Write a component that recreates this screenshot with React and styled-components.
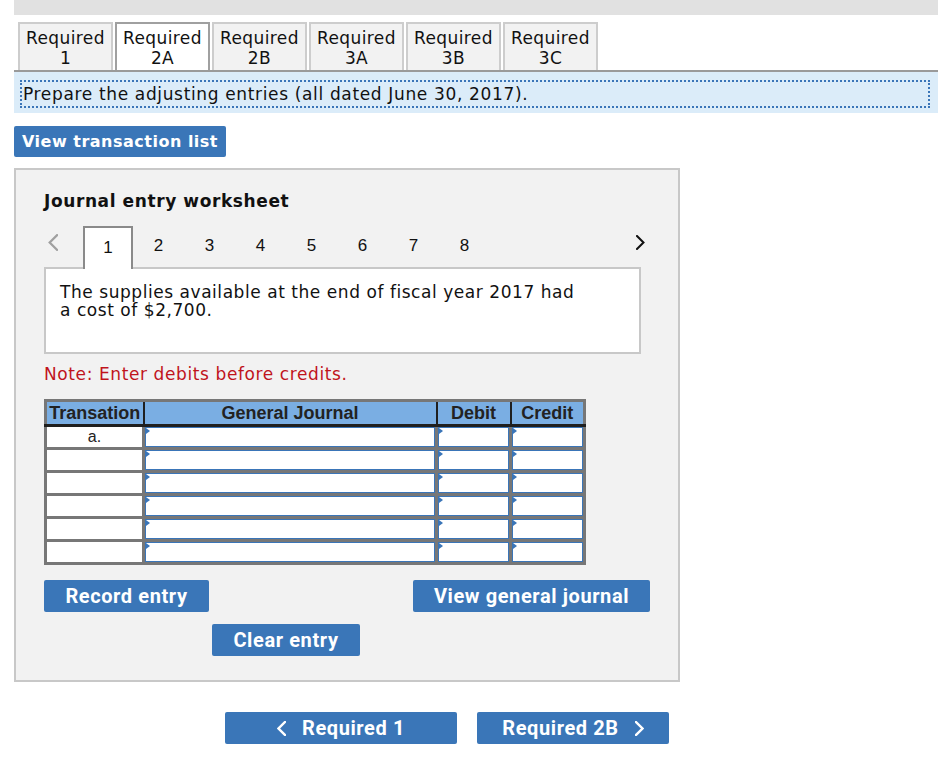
import React from 'react';
import styled, { createGlobalStyle } from 'styled-components';

const GlobalStyle = createGlobalStyle`
  body {
    margin: 0;
    background: #fff;
    font-family: "DejaVu Sans", Verdana, sans-serif;
    color: #111;
  }
`;

const Page = styled.div`
  width: 924px;
  padding: 0 10px 0 14px;
`;

const TopBar = styled.div`
  height: 15px;
  background: #e1e1e1;
`;

const TabRow = styled.div`
  display: flex;
  gap: 2px;
  margin-top: 7px;
  padding-left: 4px;
  border-bottom: 2px solid #9a9a9a;
`;

const Tab = styled.div`
  box-sizing: border-box;
  width: 95px;
  height: 48px;
  padding-top: 4px;
  border: 2px solid ${({ active }) => (active ? '#a0a0a0' : '#cdcdcd')};
  border-bottom: none;
  background: ${({ active }) => (active ? '#fff' : '#f2f2f2')};
  font-size: 17px;
  letter-spacing: 0.4px;
  line-height: 20px;
  text-align: center;
  color: #111;
`;

const Instruction = styled.div`
  box-sizing: border-box;
  height: 41px;
  padding: 8px 8px 5px 6px;
  background: #dbecf9;
`;

const Dotted = styled.div`
  height: 100%;
  box-sizing: border-box;
  border: 2px dotted #3a75b8;
  display: flex;
  align-items: center;
  font-size: 17px;
  letter-spacing: 0.65px;
  padding-left: 1px;
`;

const Button = styled.button`
  box-sizing: border-box;
  height: ${({ h }) => h || 32}px;
  width: ${({ w }) => w}px;
  border: none;
  border-radius: 2px;
  background: #3a76b8;
  color: #fff;
  font-family: Roboto, "Liberation Sans", sans-serif;
  font-weight: bold;
  font-size: 20px;
  letter-spacing: 0.6px;
  display: flex;
  align-items: center;
  justify-content: center;
  gap: 16px;
  padding: 0;
  cursor: pointer;
`;

const TransactionButton = styled(Button)`
  margin-top: 13px;
  font-family: "DejaVu Sans", Verdana, sans-serif;
  font-size: 16px;
  letter-spacing: 0.5px;
`;

const Panel = styled.div`
  box-sizing: border-box;
  width: 666px;
  margin-top: 11px;
  border: 2px solid #c8c8c8;
  background: #f2f2f2;
  padding: 21px 28px 24px;
`;

const Title = styled.div`
  font-weight: bold;
  font-size: 17px;
  letter-spacing: 0.6px;
  line-height: 20px;
`;

const Pager = styled.div`
  display: flex;
  height: 41px;
  margin-top: 15px;
`;

const Arrow = styled.div`
  width: 39px;
  display: flex;
  align-items: center;
  box-sizing: border-box;
  padding-left: ${({ right }) => (right ? '0' : '4px')};
  margin-left: ${({ right }) => (right ? 'auto' : '0')};
  justify-content: ${({ right }) => (right ? 'flex-end' : 'flex-start')};
  padding-right: ${({ right }) => (right ? '5px' : '0')};
  padding-bottom: 8px;
`;

const PageNum = styled.div`
  box-sizing: border-box;
  width: ${({ active }) => (active ? 50 : 51)}px;
  display: flex;
  align-items: flex-end;
  justify-content: center;
  padding-bottom: 11px;
  font-family: "Liberation Sans", Arial, sans-serif;
  font-size: 17px;
  border: ${({ active }) => (active ? '2px solid #8a8a8a' : 'none')};
  border-bottom: none;
  background: ${({ active }) => (active ? '#fff' : 'transparent')};
  position: relative;
  z-index: 1;
  margin-bottom: ${({ active }) => (active ? '-2px' : '0')};
`;

const Description = styled.div`
  box-sizing: border-box;
  width: 597px;
  height: 87px;
  border: 2px solid #c8c8c8;
  background: #fff;
  padding: 14px 60px 0 14px;
  font-size: 17px;
  letter-spacing: 0.55px;
  line-height: 18px;
`;

const Note = styled.div`
  margin-top: 11px;
  color: #c0141c;
  font-size: 17px;
  letter-spacing: 0.6px;
  line-height: 18px;
`;

const Table = styled.table`
  margin-top: 16px;
  border-collapse: collapse;
  border: 3px solid #777;
  width: 540px;
  font-family: "Liberation Sans", Arial, sans-serif;
  table-layout: fixed;
`;

const Th = styled.th`
  background: #7aaee3;
  color: #222;
  font-size: 18px;
  font-weight: bold;
  height: 22px;
  padding: 0;
  border-left: 2px solid #1f1f1f;
  border-bottom: 3px solid #1f1f1f;
  &:first-child {
    border-left: none;
  }
`;

const Td = styled.td`
  height: 20px;
  padding: 0;
  border: 3px solid #777;
  background: ${({ input }) => (input ? '#777' : '#fff')};
  text-align: center;
  font-size: 16px;
  color: #222;
  line-height: 18px;
`;

const InputBox = styled.div`
  position: relative;
  box-sizing: border-box;
  height: 20px;
  background: #fff;
  border: 1px solid #3a75b8;
  &::before {
    content: '';
    position: absolute;
    left: 0;
    top: 0;
    border-left: 4px solid #3a75b8;
    border-top: 3px solid transparent;
    border-bottom: 3px solid transparent;
  }
`;

const ButtonRow = styled.div`
  display: flex;
  justify-content: space-between;
  margin-top: 15px;
`;

const SecondRow = styled.div`
  margin-top: 12px;
  padding-left: 168px;
`;

const BottomNav = styled.div`
  display: flex;
  gap: 20px;
  margin-top: 30px;
  padding-left: 211px;
`;

const Chevron = ({ dir = 'left', color = '#999', size = 14, stroke = 2 }) => (
  <svg width={size * 0.6} height={size} viewBox="0 0 9 15" fill="none">
    <path
      d={dir === 'left' ? 'M8 1L1.5 7.5L8 14' : 'M1 1L7.5 7.5L1 14'}
      stroke={color}
      strokeWidth={stroke}
      strokeLinecap="square"
    />
  </svg>
);

const tabs = [
  ['Required', '1'],
  ['Required', '2A'],
  ['Required', '2B'],
  ['Required', '3A'],
  ['Required', '3B'],
  ['Required', '3C'],
];

const rows = ['a.', '', '', '', '', ''];

function App() {
  return (
    <Page>
      <GlobalStyle />
      <TopBar />
      <TabRow>
        {tabs.map(([a, b], i) => (
          <Tab key={i} active={i === 1}>
            {a}
            <br />
            {b}
          </Tab>
        ))}
      </TabRow>
      <Instruction>
        <Dotted>Prepare the adjusting entries (all dated June 30, 2017).</Dotted>
      </Instruction>
      <TransactionButton w={212} h={31}>
        View transaction list
      </TransactionButton>
      <Panel>
        <Title>Journal entry worksheet</Title>
        <Pager>
          <Arrow>
            <Chevron dir="left" color="#a0a0a0" size={17} />
          </Arrow>
          {[1, 2, 3, 4, 5, 6, 7, 8].map((n) => (
            <PageNum key={n} active={n === 1}>
              {n}
            </PageNum>
          ))}
          <Arrow right>
            <Chevron dir="right" color="#111" size={15} />
          </Arrow>
        </Pager>
        <Description>
          The supplies available at the end of fiscal year 2017 had a cost of $2,700.
        </Description>
        <Note>Note: Enter debits before credits.</Note>
        <Table>
          <colgroup>
            <col style={{ width: 98 }} />
            <col style={{ width: 293 }} />
            <col style={{ width: 74 }} />
            <col style={{ width: 74 }} />
          </colgroup>
          <thead>
            <tr>
              <Th>Transation</Th>
              <Th>General Journal</Th>
              <Th>Debit</Th>
              <Th>Credit</Th>
            </tr>
          </thead>
          <tbody>
            {rows.map((r, i) => (
              <tr key={i}>
                <Td>{r}</Td>
                <Td input>
                  <InputBox />
                </Td>
                <Td input>
                  <InputBox />
                </Td>
                <Td input>
                  <InputBox />
                </Td>
              </tr>
            ))}
          </tbody>
        </Table>
        <ButtonRow>
          <Button w={165}>Record entry</Button>
          <Button w={237}>View general journal</Button>
        </ButtonRow>
        <SecondRow>
          <Button w={148}>Clear entry</Button>
        </SecondRow>
      </Panel>
      <BottomNav>
        <Button w={232}>
          <Chevron dir="left" color="#fff" size={15} stroke={2.4} />
          Required 1
        </Button>
        <Button w={192}>
          Required 2B
          <Chevron dir="right" color="#fff" size={15} stroke={2.4} />
        </Button>
      </BottomNav>
    </Page>
  );
}

export default App;
